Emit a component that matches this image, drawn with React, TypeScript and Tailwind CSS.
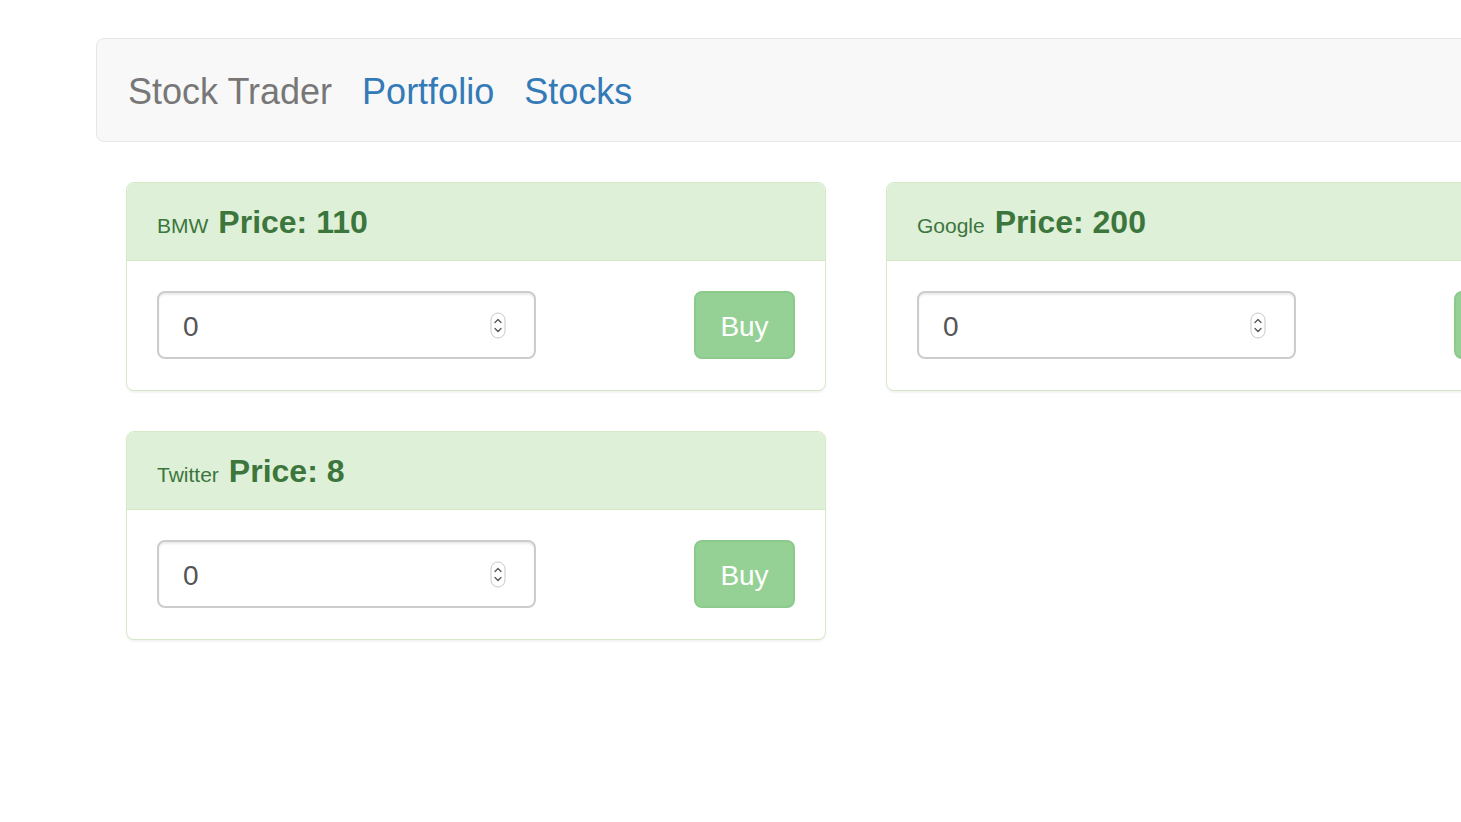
import React from 'react';

type Stock = { name: string; price: number };

const stocks: Stock[] = [
  { name: 'BMW', price: 110 },
  { name: 'Google', price: 200 },
  { name: 'Twitter', price: 8 },
];

function Spinner() {
  return (
    <svg width="16" height="27" viewBox="0 0 16 27" className="shrink-0">
      <rect x="1" y="1" width="14" height="25" rx="7" fill="#fff" stroke="#c8c8c8" strokeWidth="1" />
      <path d="M5 10.5 L8 7.5 L11 10.5" fill="none" stroke="#555" strokeWidth="1.3" strokeLinecap="round" strokeLinejoin="round" />
      <path d="M5 16.5 L8 19.5 L11 16.5" fill="none" stroke="#555" strokeWidth="1.3" strokeLinecap="round" strokeLinejoin="round" />
    </svg>
  );
}

function StockCard({ stock }: { stock: Stock }) {
  return (
    <div className="w-[700px] shrink-0 rounded-[8px] border border-[#d6e9c6] bg-white shadow-[0_2px_2px_rgba(0,0,0,0.05)] mb-[40px] overflow-hidden">
      <div className="bg-[#dff0d8] border-b border-[#d6e9c6] px-[30px] pt-[21px] pb-[20px] text-[#3c763d]">
        <h3 className="h-[36px] flex items-baseline gap-[10px] text-[32px] leading-[36px] font-bold">
          <span className="text-[21px] leading-none font-normal">{stock.name}</span>
          <span>Price: {stock.price}</span>
        </h3>
      </div>
      <div className="px-[30px] pt-[30px] pb-[31px] flex items-center justify-between">
        <div className="w-[379px] h-[68px] rounded-[8px] border-2 border-[#ccc] flex items-center pl-[24px] pr-[28px] shadow-[inset_0_2px_2px_rgba(0,0,0,0.075)]">
          <span className="flex-1 pt-[3px] text-[28px] text-[#555]">0</span>
          <Spinner />
        </div>
        <button className="w-[101px] h-[68px] rounded-[8px] border-2 border-[#8bca8b] bg-[#95d195] pt-[3px] text-white text-[28px] cursor-not-allowed">
          Buy
        </button>
      </div>
    </div>
  );
}

export default function App() {
  return (
    <div className="w-[1461px] h-[822px] overflow-hidden bg-white" style={{ fontFamily: '"Liberation Sans", Arial, sans-serif' }}>
      <div className="pl-[96px] pt-[38px]">
        <nav className="w-[1500px] h-[104px] rounded-[8px] border border-[#e7e7e7] bg-[#f8f8f8] flex items-center px-[31px] pt-[4px] gap-[30px] text-[36px] mb-[40px]">
          <span className="text-[#777]">Stock Trader</span>
          <a className="text-[#337ab7]">Portfolio</a>
          <a className="text-[#337ab7]">Stocks</a>
        </nav>
        <div className="pl-[30px] flex flex-wrap gap-x-[60px] w-[1520px]">
          {stocks.map((s) => (
            <React.Fragment key={s.name}>
              <StockCard stock={s} />
              {s.name === 'Google' && <div className="basis-full h-0" />}
            </React.Fragment>
          ))}
        </div>
      </div>
    </div>
  );
}
